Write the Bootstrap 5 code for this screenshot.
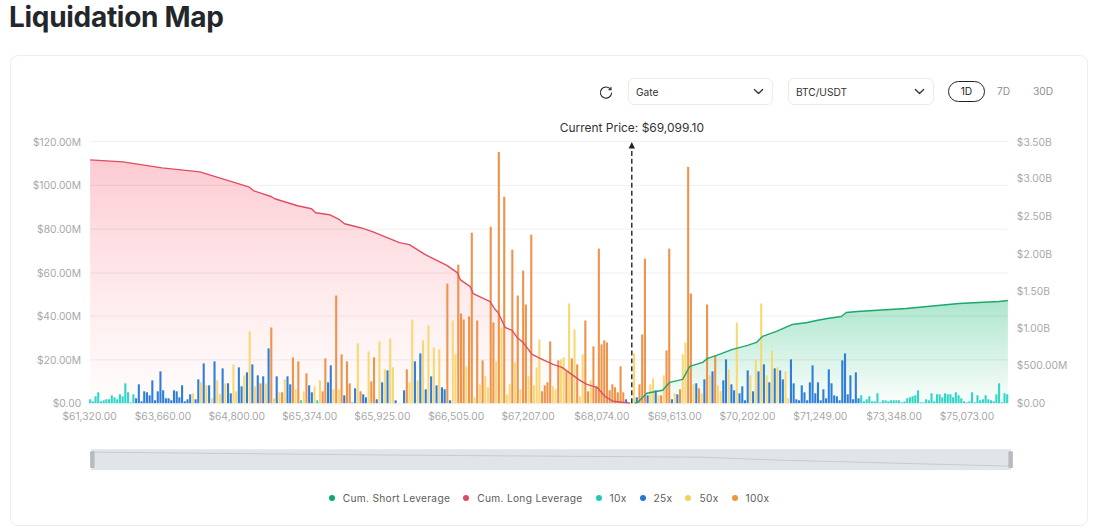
<!DOCTYPE html>
<html lang="en">
<head>
<meta charset="utf-8">
<title>Liquidation Map</title>
<link href="https://cdn.jsdelivr.net/npm/bootstrap@5.3.0/dist/css/bootstrap.min.css" rel="stylesheet">
<style>
html,body{background:#fff;overflow:hidden}
body{font-family:Inter,"Liberation Sans",sans-serif;color:#212529}
.page-wrap{padding:0 8px 0 10px}
.page-title{font-size:28px;line-height:35px;font-weight:700;margin:0 0 20px -1px;color:#23272b;letter-spacing:-.3px}
.map-card{border:1px solid #eceeef;border-radius:8px;height:471px;box-shadow:none}
.tool-row{padding:22px 23px 0 0;height:49px}
.refresh-ico{width:16px;height:16px;margin-right:14px}
.pick{width:145px;height:27px;font-size:10.2px;line-height:15px;padding:6px 22px 4px 7px;border:1px solid #e9ebee;border-radius:6px;color:#333;background-position:right 7px center;background-size:13px 11px;margin-right:15px}
.pick.wide{width:146px;margin-right:14px}
.range-btn{font-size:10.2px;line-height:13px;padding:3px 11px;border:1px solid transparent;border-radius:11px;color:#8f8f8f;height:21px;--bs-btn-hover-color:#8f8f8f}
.range-btn.on{width:37px;padding:3px 0;border-color:#222;color:#222}
.range-btn.tail{width:42px;padding:3px 0}
.chart-svg{display:block}
.chart-svg text{font-family:Inter,"Liberation Sans",sans-serif;font-size:10.3px;fill:#a8a8a8}
.chart-svg text.price{font-size:12px;fill:#333}
.legend-row{font-size:10.2px;letter-spacing:.3px;line-height:14px;color:#5c5c5c;height:46px;padding-bottom:8px}
.dot{width:6px;height:6px;border-radius:50%;margin-right:8px}
.leg-item{margin:0 6.5px}
.c-short{background:#10a574}.c-long{background:#dd4a63}.c-10{background:#22c8c0}.c-25{background:#2b74d4}.c-50{background:#f7d058}.c-100{background:#ef9440}
</style>
</head>
<body>
<div class="page-wrap">
  <h1 class="page-title">Liquidation Map</h1>
  <div class="card map-card">
    <div class="tool-row d-flex justify-content-end align-items-center">
      <svg class="refresh-ico" viewBox="0 0 16 16" fill="none" stroke="#222" stroke-width="1.1" stroke-linecap="round" stroke-linejoin="round"><path d="M12.6 5.4A5.6 5.6 0 1 0 13.6 9"/><path d="M13 3.4V5.8H10.8"/></svg>
      <select class="form-select pick" aria-label="Exchange"><option>Gate</option></select>
      <select class="form-select pick wide" aria-label="Pair"><option>BTC/USDT</option></select>
      <button type="button" class="btn range-btn on">1D</button>
      <button type="button" class="btn range-btn">7D</button>
      <button type="button" class="btn range-btn tail">30D</button>
    </div>
    <svg id="chart" class="chart-svg" width="1076" height="375" viewBox="11 105 1076 375" xmlns="http://www.w3.org/2000/svg">
      <defs>
        <linearGradient id="redFill" x1="0" y1="0" x2="0" y2="1"><stop offset="0" stop-color="#f98e9e" stop-opacity=".47"/><stop offset="1" stop-color="#fbb" stop-opacity=".04"/></linearGradient>
        <linearGradient id="greenFill" x1="0" y1="0" x2="0" y2="1"><stop offset="0" stop-color="#3cc488" stop-opacity=".42"/><stop offset="1" stop-color="#3cc488" stop-opacity=".02"/></linearGradient>
      </defs>
      <g id="areas"></g>
      <g stroke="#000" stroke-opacity=".07" stroke-width="1">
        <path d="M89 141.5H1009M89 185.5H1009M89 229.5H1009M89 273.5H1009M89 316.5H1009M89 360.5H1009"/>
      </g>
      <g id="bars"></g>
      <g id="lines" fill="none" stroke-width="1.4" stroke-linejoin="round"></g>
      <path d="M89 404.5H1009" stroke="#e6e6e6" stroke-width="1" opacity=".6"/>
      <path d="M632 404V148" stroke="#222" stroke-width="1.4" stroke-dasharray="5 3"/>
      <path d="M632 142L628.8 148.5H635.2Z" fill="#222"/>
      <text class="price" x="632" y="132" text-anchor="middle">Current Price: $69,099.10</text>
      <g text-anchor="end">
        <text x="80" y="146">$120.00M</text><text x="80" y="189">$100.00M</text><text x="80" y="233">$80.00M</text><text x="80" y="277">$60.00M</text><text x="80" y="320.5">$40.00M</text><text x="80" y="364.5">$20.00M</text><text x="80" y="408">$0.00</text>
      </g>
      <g>
        <text x="1018" y="146">$3.50B</text><text x="1018" y="182">$3.00B</text><text x="1018" y="220">$2.50B</text><text x="1018" y="258">$2.00B</text><text x="1018" y="295">$1.50B</text><text x="1018" y="333">$1.00B</text><text x="1018" y="370">$500.00M</text><text x="1018" y="408">$0.00</text>
      </g>
      <g text-anchor="middle">
        <text x="88.5" y="421">$61,320.00</text><text x="162" y="421">$63,660.00</text><text x="236" y="421">$64,800.00</text><text x="309" y="421">$65,374.00</text><text x="382" y="421">$65,925.00</text><text x="456" y="421">$66,505.00</text><text x="528" y="421">$67,207.00</text><text x="602" y="421">$68,074.00</text><text x="675" y="421">$69,613.00</text><text x="748" y="421">$70,202.00</text><text x="821" y="421">$71,249.00</text><text x="895" y="421">$73,348.00</text><text x="968" y="421">$75,073.00</text>
      </g>
      <rect x="90" y="450" width="922" height="21" fill="#e1e5ea"/>
      <path d="M91 453L400 456L700 458L780 461L1011 467" fill="none" stroke="#c6cbd2" stroke-width="1"/>
      <rect x="89" y="452" width="4.5" height="17" rx="1" fill="#b7babe"/>
      <rect x="1009.5" y="452" width="4.5" height="17" rx="1" fill="#b7babe"/>
    </svg>
    <div class="legend-row d-flex justify-content-center align-items-center">
      <span class="leg-item d-flex align-items-center"><span class="dot c-short"></span>Cum. Short Leverage</span>
      <span class="leg-item d-flex align-items-center"><span class="dot c-long"></span>Cum. Long Leverage</span>
      <span class="leg-item d-flex align-items-center"><span class="dot c-10"></span>10x</span>
      <span class="leg-item d-flex align-items-center"><span class="dot c-25"></span>25x</span>
      <span class="leg-item d-flex align-items-center"><span class="dot c-50"></span>50x</span>
      <span class="leg-item d-flex align-items-center"><span class="dot c-100"></span>100x</span>
    </div>
  </div>
</div>
<script src="https://cdn.jsdelivr.net/npm/bootstrap@5.3.0/dist/js/bootstrap.bundle.min.js"></script>
<script>
var NS='http://www.w3.org/2000/svg',BASE=404,STEP=2.71;
var COL={t:'#2fd6c8',b:'#2f7fd8',y:'#f8d775',o:'#ee9349'};
var SEG=[
[89,'t4 t2 t7 t11 t2 t3 t4 t4 t8 t6 t4 t9 t7 t20 t11 t1 t9 b5 b19 b2 b12 b11 b8 b23 b3 b12 b32 b13 b5 b5 b3 b13 b12 b6 b18 b2 b4 b9 y10 b4 b24 y21 b40 y18 b18 y5 b42 y23 y9 b35 y20 b20 b10 y39 y12 b36 b17 y28 b31 y72 b39 y17 b28 o20 b27 y20 b55 o76 y5 b27 y11 o11 y24 b27 b19 o46 y14 o42 t3 y12 o30 b18 b11 y17 t3 y23 o12 o45 b21 b38 y14 o108 y14 o49 b8 o42 o20 t1 b15 y60 o12 b9 b6 y52 o22 o46 b4 y62 b21 y34 b33 y65 y36 b3'],
[403.7,'b13 o34 y21 y84 b42 y23 b50 y63 b14 y78 b27 y56 b18 y54 b16 b14 o120 b3 y83 y49'],
[458,'o139 o90 o84 y37 o87 o171 y6 o83 y19 o43 y27 y16 o177 o81 y42 o252 y76 o207 y9 y19 o154 y41 o108 y14 o133 o99 y27 o169 y18 y36 y64 o12 o18 o21 o62 y17 y14 o43 y44 y46 o32 y100 o45 y74 o39 y7 y49 o83 o12 y23 o57 o17 o155 o59 o63 o61 o13 o19 o16 o11'],
[620.7,'o37 o11 b4 b1 b0 y50 b6 o19 o69 o145 b8 y19 y25 b13 y8 o8 y28 o53 o155 b4 y10 b9 o14 y49 y61 o237 o110 y19 b20 o15 y10 b24 o99 y28 b32 o48 y18 y12 b23 b44 y34 b19 b13 y81 b10'],
[742.7,'b17 b3 b33 y28 b12 y44 b32 y100 b39 y28 b21 y53 b35 y36 b33 b24 y32 y5 b44 b20 b4 b3 b18 b11 b3 b21 b38 b10 b21 b3 b14 b5 b34 b20 b8 b7 b3 b43 b50 b9 b28 b4 b31 b5 t8 t2 t4 t7 t2 t2 t10 t1 t3 t3 t2 t3 t3 t3 t3 t1 t2 t5 t6 t7 t8 t13 t1 t1 t4 t3 t10 t2 t9 t9 t6 t10 t9 t9 t6 t11 t8 t5 t2 t1 t2 t11 t1 t8 t3 t4 t8 t4 t3 t2 t9 t20 t1 t10 t9']
];
var barsG=document.getElementById('bars');
SEG.forEach(function(s){
  s[1].split(' ').forEach(function(v,i){
    var h=parseFloat(v.slice(1));if(!h)return;
    var r=document.createElementNS(NS,'rect');
    r.setAttribute('x',(s[0]+i*STEP-1).toFixed(2));
    r.setAttribute('y',BASE-h);r.setAttribute('width',2.1);r.setAttribute('height',h);
    r.setAttribute('fill',COL[v[0]]);barsG.appendChild(r);
  });
});
var RED=[[89,160],[122,162],[161,168],[199,172],[248,187],[253,191],[271,197],[274,199],[297,206],[311,209],[315,213],[329,215],[339,220],[344,224],[360,228],[372,232],[399,243],[409,245],[425,255],[447,266],[457,273],[460,280],[470,287],[473,294],[490,302],[495,310],[498,313],[505,328],[512,331],[517,338],[523,343],[532,355],[540,359],[553,365],[562,368],[580,381],[587,385],[597,388],[605,397],[613,402],[630,404]];
var GREEN=[[635,404],[638,403],[647,394],[663,391],[670,383],[683,380],[690,367],[703,363],[708,359],[717,356],[733,350],[748,346],[757,343],[763,337],[777,332],[793,325],[808,323],[817,321],[828,319],[842,317],[847,313],[858,312],[907,309],[960,304],[1000,302],[1009,301]];
function pts(a){return a.map(function(p){return p.join(',')}).join(' ')}
function add(g,tag,attrs){var e=document.createElementNS(NS,tag);for(var k in attrs)e.setAttribute(k,attrs[k]);document.getElementById(g).appendChild(e)}
add('areas','polygon',{points:pts(RED)+' 89,404',fill:'url(#redFill)'});
add('areas','polygon',{points:pts(GREEN)+' 1009,404 635,404',fill:'url(#greenFill)'});
add('lines','polyline',{points:pts(RED),stroke:'#e04d63'});
add('lines','polyline',{points:pts(GREEN),stroke:'#1aa86c'});
</script>
</body>
</html>
